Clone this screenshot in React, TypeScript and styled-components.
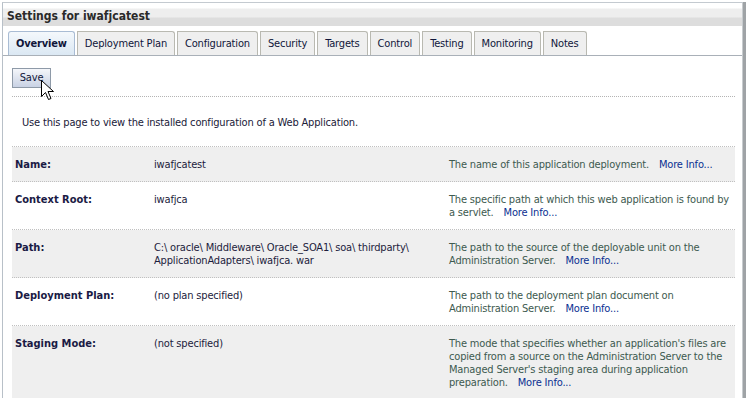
import styled, { createGlobalStyle } from "styled-components";

const GlobalStyle = createGlobalStyle`
  html, body {
    margin: 0;
    padding: 0;
    background: #ffffff;
  }
  body {
    font-family: "DejaVu Sans Condensed", "Liberation Sans", sans-serif;
    font-size: 11px;
    letter-spacing: -0.17px;
    color: #1c1c3c;
  }
`;

const Page = styled.div`
  width: 747px;
  height: 398px;
  padding: 2px 0 0 2px;
  box-sizing: border-box;
  overflow: hidden;
`;

const Frame = styled.div`
  width: 741px;
  height: 400px;
  box-sizing: border-box;
  border-top: 1px solid #c4cad0;
  border-left: 1px solid #b8c0c8;
  border-right: 1px solid #c8cccf;
  box-shadow: 3px 0 0 #9fa3a6;
  position: relative;
`;

const Header = styled.div`
  height: 23px;
  padding: 6px 0 0 4px;
  box-sizing: border-box;
  background: linear-gradient(#ffffff 0, #ffffff 5px, #eeeeee 6px, #eeeeee 14px, #dddddd 15px, #dddddd 100%);
  font-weight: bold;
  font-size: 12px;
  letter-spacing: 0;
  color: #2a2a2a;
`;

const TabBar = styled.div`
  display: flex;
  align-items: flex-end;
  gap: 2px;
  height: 29px;
  padding-left: 5px;
  border-bottom: 1px solid #a9b0b8;
`;

const Tab = styled.div<{ $active?: boolean }>`
  height: 24px;
  box-sizing: border-box;
  padding: 0 ${(p) => (p.$active ? "7px" : "7px")};
  display: flex;
  align-items: center;
  white-space: nowrap;
  border: 1px solid ${(p) => (p.$active ? "#a9bcd4" : "#b9b9b1")};
  border-bottom: none;
  border-radius: ${(p) => (p.$active ? "3px 3px 0 0" : "0 3px 0 0")};
  background: ${(p) =>
    p.$active ? "linear-gradient(#f4f8fc, #dbe8f3)" : "#efefef"};
  font-weight: ${(p) => (p.$active ? "bold" : "normal")};
  color: #10163a;
`;

const Body = styled.div`
  padding: 12px 7px 0 9px;
`;

const Toolbar = styled.div`
  height: 28px;
  border-bottom: 1px dotted #b4b4b4;
  position: relative;
`;

const SaveButton = styled.button`
  height: 20px;
  width: 39px;
  padding: 0 0 2px 0;
  border: 1px solid #8e9aa8;
  background: linear-gradient(#f4f6fa, #c9d2e4);
  font-family: inherit;
  font-size: 11px;
  letter-spacing: inherit;
  color: #10163a;
  text-align: center;
`;

const Cursor = styled.svg`
  position: absolute;
  left: 29px;
  top: 12px;
`;

const Intro = styled.p`
  margin: 0;
  padding: 19px 0 0 10px;
  height: 50px;
  box-sizing: border-box;
  color: #202038;
  border-bottom: 1px dotted #c0c0c0;
`;

const Row = styled.div<{ $shaded?: boolean }>`
  display: grid;
  grid-template-columns: 142px 295px 285px;
  padding: 11px 0 10px 0;
  line-height: 13px;
  white-space: nowrap;
  background: ${(p) => (p.$shaded ? "#efefef" : "#ffffff")};
  border-bottom: 1px dotted #c0c0c0;
`;

const Label = styled.div`
  padding-left: 3px;
  font-weight: bold;
  letter-spacing: 0;
  color: #1a1a44;
`;

const Value = styled.div`
  color: #1c1c3c;
`;

const Description = styled.div`
  color: #3d5a4f;
`;

const MoreInfo = styled.a`
  color: #0b2f92;
  text-decoration: none;
  margin-left: 10px;
`;

const tabs = [
  "Overview",
  "Deployment Plan",
  "Configuration",
  "Security",
  "Targets",
  "Control",
  "Testing",
  "Monitoring",
  "Notes",
];

type Field = {
  label: string;
  value: string[];
  desc: string[];
};

const fields: Field[] = [
  {
    label: "Name:",
    value: ["iwafjcatest"],
    desc: ["The name of this application deployment."],
  },
  {
    label: "Context Root:",
    value: ["iwafjca"],
    desc: ["The specific path at which this web application is found by", "a servlet."],
  },
  {
    label: "Path:",
    value: [
      "C:\\ oracle\\ Middleware\\ Oracle_SOA1\\ soa\\ thirdparty\\",
      "ApplicationAdapters\\ iwafjca. war",
    ],
    desc: ["The path to the source of the deployable unit on the", "Administration Server."],
  },
  {
    label: "Deployment Plan:",
    value: ["(no plan specified)"],
    desc: ["The path to the deployment plan document on", "Administration Server."],
  },
  {
    label: "Staging Mode:",
    value: ["(not specified)"],
    desc: [
      "The mode that specifies whether an application's files are",
      "copied from a source on the Administration Server to the",
      "Managed Server's staging area during application",
      "preparation.",
    ],
  },
];

const Lines = ({ lines, more }: { lines: string[]; more?: boolean }) => (
  <>
    {lines.map((line, i) => (
      <div key={i}>
        {line}
        {more && i === lines.length - 1 && <MoreInfo href="#">More Info...</MoreInfo>}
      </div>
    ))}
  </>
);

export default function App() {
  return (
    <>
      <GlobalStyle />
      <Page>
        <Frame>
          <Header>Settings for iwafjcatest</Header>
          <TabBar>
            {tabs.map((t, i) => (
              <Tab key={t} $active={i === 0}>
                {t}
              </Tab>
            ))}
          </TabBar>
          <Body>
            <Toolbar>
              <SaveButton>Save</SaveButton>
              <Cursor width="14" height="21" viewBox="0 0 14 21">
                <path
                  d="M0.5 0.5 L0.5 16.5 L4.5 12.5 L7.5 19.5 L10 18.5 L7 11.5 L12.5 11.5 Z"
                  fill="#ffffff"
                  stroke="#000000"
                  strokeWidth="1"
                />
              </Cursor>
            </Toolbar>
            <Intro>Use this page to view the installed configuration of a Web Application.</Intro>
            {fields.map((f, i) => (
              <Row key={f.label} $shaded={i % 2 === 0}>
                <Label>{f.label}</Label>
                <Value>
                  <Lines lines={f.value} />
                </Value>
                <Description>
                  <Lines lines={f.desc} more />
                </Description>
              </Row>
            ))}
          </Body>
        </Frame>
      </Page>
    </>
  );
}
